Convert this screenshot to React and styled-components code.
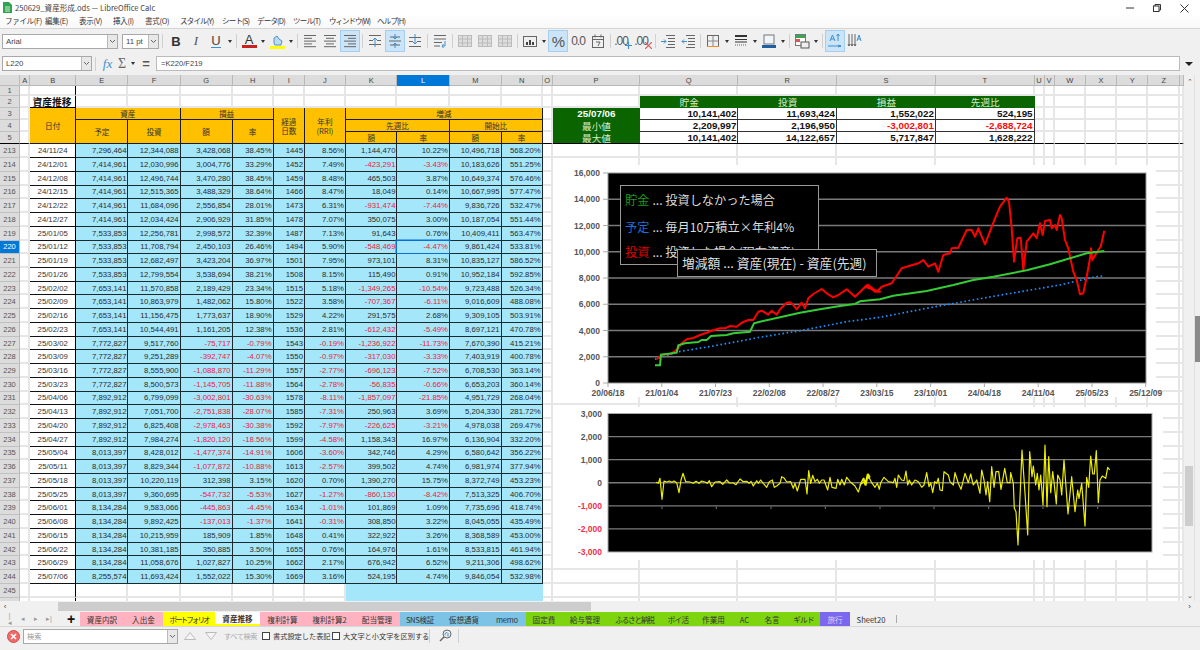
import React from "react";
import styled, { createGlobalStyle } from "styled-components";

const FONT = `"Liberation Sans","Noto Sans CJK JP",sans-serif`;
const CJK = `"Noto Sans CJK JP","Liberation Sans",sans-serif`;

const Global = createGlobalStyle`
  html, body { margin: 0; padding: 0; background: #f0f0f0; }
  * { box-sizing: border-box; }
`;

const Page = styled.div`
  width: 1200px; height: 650px; overflow: hidden; display: flex; flex-direction: column;
  background: #f0f0f0; font-family: ${FONT}; color: #333;
`;

/* ---------- title + menu ---------- */
const TitleBar = styled.div`
  height: 14px; flex: none; background: #fff; display: flex; align-items: center; padding-left: 3px;
  font: 7.600px ${CJK}; color: #444; gap: 3px; padding-top: 1px;
`;
const TitleText = styled.span`flex: 1; white-space: nowrap;`;
const WinControls = styled.div`display: flex; align-items: center; margin-right: 11px; gap: 19px; padding-top: 1px;`;
const MenuBar = styled.div`
  height: 15px; flex: none; background: linear-gradient(#fff, #f8f8f8); display: flex; align-items: center;
  padding: 0 0 2px 5px; gap: 10px; font: 7.500px ${CJK}; color: #333; border-bottom: 1px solid #d4d4d4;
`;
const MenuItem = styled.span`white-space: nowrap; width: ${p => p.$w}px; letter-spacing: ${p => p.$ls ?? -0.3}px;`;

/* ---------- toolbars ---------- */
const Toolbar = styled.div`
  height: 24px; flex: none; display: flex; align-items: center; padding-left: 2px; background: #f0f0f0;
`;
const FormulaBar = styled.div`
  height: 22px; flex: none; display: flex; align-items: center; padding: 0 0 1px 2px; background: #f0f0f0;
`;
const Combo = styled.div`
  width: ${p => p.$w}px; height: 15px; flex: none; border: 1px solid #a8a8a8; background: #fff; display: flex; align-items: center;
  margin-right: ${p => p.$mr || 0}px; font: 7.800px ${FONT}; color: #444; padding-left: 3px; justify-content: space-between;
`;
const ComboArrow = styled.span`
  width: 10px; height: 100%; background: #e8e8e8; border-left: 1px solid #bbb; display: flex; align-items: center; justify-content: center;
`;
const ToolBtn = styled.div`
  width: ${p => p.$w || 20}px; height: 22px; flex: none; display: flex; align-items: center; justify-content: center;
  background: ${p => p.$on ? "#cce4f7" : "transparent"}; border: 1px solid ${p => p.$on ? "#a3cff2" : "transparent"};
  color: #555; position: relative;
`;
const Caret = styled.span`
  width: 8px; flex: none; height: 8px; display: flex; align-items: center; justify-content: center;
  &::after { content: ""; border: 2.3px solid transparent; border-top: 3px solid #333; border-bottom: 0; }
`;
const Sep = styled.span`
  width: 1px; height: 14px; background: #d0d0d0; flex: none; margin: 0 ${p => p.$m ?? 2}px;
`;
const BoldGlyph = styled.span`font: 700 13px ${FONT}; color: #333;`;
const ItalicGlyph = styled.span`font: italic 13px "Liberation Serif", serif; color: #555;`;
const UnderGlyph = styled.span`font: 13px ${FONT}; color: #444; border-bottom: 1.5px solid #3d8fd1; line-height: 12px;`;
const ColorGlyph = styled.span`
  font: 13px ${FONT}; color: #333; line-height: 11px; width: 15px; text-align: center; border-bottom: 3px solid ${p => p.$c};
`;
const TextGlyph = styled.span`font: ${p => p.$s || 13}px ${FONT}; color: #555; letter-spacing: -1px;`;
const FxGlyph = styled.span`font: italic 13px "Liberation Serif", serif; color: #3d8fd1; width: 15px; text-align: center; margin-left: 1px;`;
const SumGlyph = styled.span`font: 14px "Liberation Serif", serif; color: #666; width: 14px; text-align: center;`;
const EqGlyph = styled.span`font: 700 13px ${FONT}; color: #555; width: 14px; text-align: center; margin: 0 3px 0 2px;`;
const FormulaInput = styled.div`
  width: 1024px; height: 15px; flex: none; background: #fff; border: 1px solid #bbb; font: 7.600px ${FONT}; color: #444;
  display: flex; align-items: center; padding-left: 4px;
`;
const FormulaArrow = styled.span`
  margin-left: 5px; border: 4px solid transparent; border-top: 4px solid #222; border-bottom: 0; width: 0; height: 0;
`;

const Svg16 = ({ children, w = 16, h = 16 }) => (
  <svg width={w} height={h} viewBox={`0 0 ${w} ${h}`} fill="none" stroke="#666" strokeWidth="1">{children}</svg>
);
const Lines = ({ rows }) => (
  <Svg16>{rows.map(([a, b], i) => <line key={i} x1={a} x2={b} y1={2.5 + i * 2.8} y2={2.5 + i * 2.8} />)}</Svg16>
);
const VAlign = ({ mode }) => (
  <Svg16>
    {mode === "top" && <><line x1="2" x2="14" y1="2.5" y2="2.5" /><line x1="2" x2="6" y1="7.5" y2="7.5" /><line x1="10" x2="14" y1="7.5" y2="7.5" /><line x1="2" x2="14" y1="11.5" y2="11.5" /><path d="M8 14V5M6 7l2-2 2 2" stroke="#3d8fd1" /></>}
    {mode === "mid" && <><line x1="2" x2="14" y1="8" y2="8" /><line x1="3" x2="13" y1="4" y2="4" /><line x1="3" x2="13" y1="12" y2="12" /><path d="M8 1v5M6 4l2 2 2-2M8 15v-5M6 12l2-2 2 2" stroke="#3d8fd1" /></>}
    {mode === "bot" && <><line x1="2" x2="14" y1="13.5" y2="13.5" /><line x1="2" x2="6" y1="8.5" y2="8.5" /><line x1="10" x2="14" y1="8.5" y2="8.5" /><line x1="2" x2="14" y1="4.5" y2="4.5" /><path d="M8 1v10M6 9l2 2 2-2" stroke="#3d8fd1" /></>}
  </Svg16>
);
const Merge = () => (
  <Svg16><rect x="1.5" y="2.5" width="13" height="11" fill="#ddd" stroke="#bbb" /><path d="M1.5 6h13M1.5 10h13M5.5 2.5v11M10.5 2.5v11" stroke="#bbb" /></Svg16>
);
const Indent = ({ dir }) => (
  <Svg16>
    <path d="M6 2.5h9M8 5.5h7M8 8.5h7M8 11.5h7M6 14.5h9" />
    {dir > 0 ? <path d="M1 8.5h5M4 6.5l2 2-2 2" stroke="#3d8fd1" /> : <path d="M7 8.5H2M4 6.5l-2 2 2 2" stroke="#3d8fd1" />}
  </Svg16>
);

const Spark = () => (
  <Svg16><rect x="1.5" y="3.5" width="13" height="10" stroke="#666" /><path d="M5 12V9M8 12V7M11 12V9" stroke="#444" strokeWidth="2" /></Svg16>
);

const Calendar = () => (
  <Svg16><rect x="2.5" y="3.5" width="11" height="11" /><path d="M2.5 6.5h11M5 1.5v3M11 1.5v3" /><path d="M6 9h4l-2 4" /></Svg16>
);

const DecSlot = styled.span`margin-left: -3px; margin-top: 8px; display: flex;`;
const DecMark = ({ add }) => (
  <>
    <TextGlyph $s={12}>.00</TextGlyph>
    <DecSlot>
      <svg width="7" height="7" viewBox="0 0 7 7">
        <path d={add ? "M3.5 0v7M0 3.5h7" : "M0 0l7 7M7 0L0 7"} stroke={add ? "#3d8fd1" : "#e05555"} strokeWidth="1.2" />
      </svg>
    </DecSlot>
  </>
);

const Chev = () => (
  <svg width="7" height="5" viewBox="0 0 7 5" fill="none" stroke="#666"><path d="M1 1l2.500 2.500L6 1" /></svg>
);

const Toolbar1 = () => (
  <Toolbar>
    <Combo $w={116} $mr={4}>Arial<ComboArrow><Chev /></ComboArrow></Combo>
    <Combo $w={37}>11 pt<ComboArrow><Chev /></ComboArrow></Combo>
    <Sep $m={3} />
    <ToolBtn><BoldGlyph>B</BoldGlyph></ToolBtn>
    <ToolBtn><ItalicGlyph>I</ItalicGlyph></ToolBtn>
    <ToolBtn><UnderGlyph>U</UnderGlyph></ToolBtn>
    <Caret /><Sep />
    <ToolBtn><ColorGlyph $c="#c9211e">A</ColorGlyph></ToolBtn>
    <Caret />
    <ToolBtn>
      <svg width="15" height="15" viewBox="0 0 15 15"><path d="M4 9V4l3-2 2 3 3 2-1 4H5z" fill="#bcdcf2" stroke="#4f94c8" /><rect y="12" width="15" height="3" fill="#ffff00" /></svg>
    </ToolBtn>
    <Caret /><Sep />
    <ToolBtn><Lines rows={[[2, 14], [2, 10], [2, 14], [2, 10], [2, 14]]} /></ToolBtn>
    <ToolBtn><Lines rows={[[2, 14], [4, 12], [2, 14], [4, 12], [2, 14]]} /></ToolBtn>
    <ToolBtn $on><Lines rows={[[2, 14], [6, 14], [2, 14], [6, 14], [2, 14]]} /></ToolBtn>
    <Sep />
    <ToolBtn><VAlign mode="top" /></ToolBtn>
    <ToolBtn $on><VAlign mode="mid" /></ToolBtn>
    <ToolBtn><VAlign mode="bot" /></ToolBtn>
    <Sep />
    <ToolBtn><Svg16><path d="M2 2.5h12M2 6h12M2 9.5h8M2 13h6" /><path d="M10 13h3V8M11.5 11l-1.5 2 1.5 2" stroke="#3d8fd1" /></Svg16></ToolBtn>
    <Sep />
    <ToolBtn><Merge /></ToolBtn>
    <ToolBtn><Merge /></ToolBtn>
    <ToolBtn><Merge /></ToolBtn>
    <Sep />
    <ToolBtn><Spark /></ToolBtn>
    <Caret />
    <ToolBtn $on><TextGlyph $s={15}>%</TextGlyph></ToolBtn>
    <ToolBtn><TextGlyph $s={12}>0.0</TextGlyph></ToolBtn>
    <ToolBtn><Calendar /></ToolBtn>
    <Sep />
    <ToolBtn><DecMark add /></ToolBtn>
    <ToolBtn><DecMark /></ToolBtn>
    <Sep />
    <ToolBtn><Indent dir={1} /></ToolBtn>
    <ToolBtn><Indent dir={-1} /></ToolBtn>
    <Sep />
    <ToolBtn><Svg16><rect x="2.5" y="2.5" width="11" height="11" stroke="#666" /><path d="M2.5 8h11M8 2.5v11" stroke="#888" /><path d="M2 13.5h12" stroke="#f08c28" /></Svg16></ToolBtn>
    <Caret />
    <ToolBtn><Svg16><path d="M2 3h12" strokeWidth="2" stroke="#333" /><path d="M2 6.5h12M2 9h12" stroke="#333" /><path d="M2 12h12" strokeDasharray="1 1" /></Svg16></ToolBtn>
    <Caret />
    <ToolBtn><Svg16><rect x="3" y="2" width="10" height="9" fill="#eef5fb" stroke="#777" /><rect x="1" y="12" width="14" height="3" fill="#1f5f9f" stroke="none" /></Svg16></ToolBtn>
    <Caret /><Sep />
    <ToolBtn><Svg16><rect x="1.5" y="1.5" width="10" height="11" fill="#fff" stroke="#777" /><rect x="2" y="2" width="9" height="3" fill="#3aa655" stroke="none" /><rect x="2" y="6" width="4" height="3" fill="#e05555" stroke="none" /><rect x="7" y="9" width="8" height="6" fill="#eee" stroke="#555" /></Svg16></ToolBtn>
    <Caret /><Sep />
    <ToolBtn $on><Svg16><path d="M3 8l2.5-6L8 8M4 6h3M1 13h13M11 14l3-1-3-1" stroke="#3d8fd1" /><path d="M11 1v7M9.500 3l1.500-2 1.500 2" stroke="#3d8fd1" /></Svg16></ToolBtn>
    <ToolBtn><Svg16><path d="M2 1v12M5 1v12M8 1v12M1 11l1 2 1-2M4 11l1 2 1-2M7 11l1 2 1-2" /><path d="M10 8l2-6 2 6M10.500 6h3" stroke="#3d8fd1" /></Svg16></ToolBtn>
  </Toolbar>
);

/* ---------- sheet ---------- */
const EDGES = [20, 30.4, 76, 128.5, 180.6, 232.7, 273.6, 305, 346, 397.5, 450, 501.6, 542.7, 553, 640, 738.5, 837, 936, 1034.6, 1044.6, 1054.6, 1086, 1117, 1148.5, 1180, 1184];
const LETTERS = ["A", "B", "E", "F", "G", "H", "I", "J", "K", "L", "M", "N", "O", "P", "Q", "R", "S", "T", "U", "V", "W", "X", "Y", "Z", ""];
const COL_TEMPLATE = EDGES.map((e, i) => `${(e - (i ? EDGES[i - 1] : 0)).toFixed(1)}px`).join(" ");

const Workspace = styled.div`height: 526px; flex: none; display: flex;`;
const Sheet = styled.div`
  width: 1184px; height: 526px; position: relative; overflow: hidden; background: #fff; display: grid;
  grid-template-columns: ${COL_TEMPLATE};
  grid-template-rows: 11px 10px 12px 12px 12px 12.400px repeat(33, 13.740px) 14px;
  font: 7.750px ${FONT}; color: #2c2c2c;
`;
const Corner = styled.div`background: #dcdcdc; border-right: 1px solid #bbb; border-bottom: 1px solid #bbb;`;
const ColHead = styled.div`
  background: ${p => p.$sel ? "#0078d7" : "#dcdcdc"}; color: ${p => p.$sel ? "#fff" : "#444"};
  border-right: 1px solid #b8b8b8; border-bottom: 1px solid ${p => p.$sel ? "#0078d7" : "#b8b8b8"};
  display: flex; align-items: center; justify-content: center; font-size: 7.500px;
`;
const RowHead = styled.div`
  background: ${p => p.$sel ? "#0078d7" : "#dcdcdc"}; color: ${p => p.$sel ? "#fff" : "#555"};
  border-right: 1px solid #b8b8b8; border-bottom: 1px solid ${p => p.$dark ? "#000" : "#c0c0c0"};
  display: flex; align-items: center; justify-content: center; font-size: 7.500px;
`;
const Blank = styled.div`
  border-right: ${p => p.$freeze ? "1px solid #000" : "2px solid #e6e6e6"};
  border-bottom: ${p => p.$dark ? "1px solid #000" : "2px solid #e6e6e6"};
  background: ${p => p.$fill ? "#a4e6fa" : "#fff"};
  ${p => p.$fill ? "border-color: #a4e6fa;" : ""}
`;
const SheetTitle = styled.div`
  border-right: 1px solid #000; border-bottom: 1px solid #000; font: 700 9.800px ${CJK}; color: #111;
  display: flex; align-items: center; padding-left: 2px; white-space: nowrap;
`;
const HeadCell = styled.div`
  grid-column: span ${p => p.$cs || 1}; grid-row: span ${p => p.$rs || 1};
  background: #ffc000; border-right: 1px solid #1a1a1a; border-bottom: 1px solid #1a1a1a;
  display: flex; align-items: center; justify-content: center; text-align: center; font: 7.600px/9px ${CJK}; color: #333;
`;
const DateCell = styled.div`
  border-right: 1px solid #000; border-bottom: 1px solid #111; background: #fff;
  display: flex; align-items: center; justify-content: center; color: #333;
`;
const Num = styled.div`
  background: #a4e6fa; border-right: 1px solid #1c2a30; border-bottom: 1px solid #1c2a30;
  display: flex; align-items: center; justify-content: flex-end; padding-right: 1px; white-space: nowrap;
  color: ${p => p.$neg ? "#f0203a" : "#2c2c2c"};
  position: relative;
`;
const Selection = styled.span`
  position: absolute; inset: -1px -1px -1px -1px; border: 1px solid #0a6fd0; box-shadow: 0 0 0 0.5px #0a6fd0; pointer-events: none;
`;
const GreenHead = styled.div`
  background: #0a6400; color: #d6ecd0; font: 9.600px ${CJK}; display: flex; align-items: center; justify-content: center; line-height: 10px;
`;
const GreenLabel = styled.div`
  background: #0a6400; color: ${p => p.$b ? "#fff" : "#d6ecd0"}; display: flex; align-items: center; justify-content: center;
  font: ${p => p.$b ? `700 9.800px ${FONT}` : `9.600px ${CJK}`}; line-height: 10px;
  border-bottom: ${p => p.$dark ? "1px solid #000" : "0"};
`;
const Val = styled.div`
  background: #fff; border-right: 1px solid #333; border-bottom: 1px solid #333;
  ${p => p.$dark ? "border-bottom-color:#000;" : ""}
  display: flex; align-items: center; justify-content: flex-end; padding-right: 1px;
  font: 700 9.800px ${FONT}; color: ${p => p.$neg ? "#ff0a0a" : "#111"};
`;

const RAW = `213 24/11/24 7,296,464 12,344,088 3,428,068 38.45% 1445 8.56% 1,144,470 10.22% 10,496,718 568.20%
214 24/12/01 7,414,961 12,030,996 3,004,776 33.29% 1452 7.49% -423,291 -3.43% 10,183,626 551.25%
215 24/12/08 7,414,961 12,496,744 3,470,280 38.45% 1459 8.48% 465,503 3.87% 10,649,374 576.46%
216 24/12/15 7,414,961 12,515,365 3,488,329 38.64% 1466 8.47% 18,049 0.14% 10,667,995 577.47%
217 24/12/22 7,414,961 11,684,096 2,556,854 28.01% 1473 6.31% -931,474 -7.44% 9,836,726 532.47%
218 24/12/27 7,414,961 12,034,424 2,906,929 31.85% 1478 7.07% 350,075 3.00% 10,187,054 551.44%
219 25/01/05 7,533,853 12,256,781 2,998,572 32.39% 1487 7.13% 91,643 0.76% 10,409,411 563.47%
220 25/01/12 7,533,853 11,708,794 2,450,103 26.46% 1494 5.90% -548,469 -4.47% 9,861,424 533.81%
221 25/01/19 7,533,853 12,682,497 3,423,204 36.97% 1501 7.95% 973,101 8.31% 10,835,127 586.52%
222 25/01/26 7,533,853 12,799,554 3,538,694 38.21% 1508 8.15% 115,490 0.91% 10,952,184 592.85%
223 25/02/02 7,653,141 11,570,858 2,189,429 23.34% 1515 5.18% -1,349,265 -10.54% 9,723,488 526.34%
224 25/02/09 7,653,141 10,863,979 1,482,062 15.80% 1522 3.58% -707,367 -6.11% 9,016,609 488.08%
225 25/02/16 7,653,141 11,156,475 1,773,637 18.90% 1529 4.22% 291,575 2.68% 9,309,105 503.91%
226 25/02/23 7,653,141 10,544,491 1,161,205 12.38% 1536 2.81% -612,432 -5.49% 8,697,121 470.78%
227 25/03/02 7,772,827 9,517,760 -75,717 -0.79% 1543 -0.19% -1,236,922 -11.73% 7,670,390 415.21%
228 25/03/09 7,772,827 9,251,289 -392,747 -4.07% 1550 -0.97% -317,030 -3.33% 7,403,919 400.78%
229 25/03/16 7,772,827 8,555,900 -1,088,870 -11.29% 1557 -2.77% -696,123 -7.52% 6,708,530 363.14%
230 25/03/23 7,772,827 8,500,573 -1,145,705 -11.88% 1564 -2.78% -56,835 -0.66% 6,653,203 360.14%
231 25/04/06 7,892,912 6,799,099 -3,002,801 -30.63% 1578 -8.11% -1,857,097 -21.85% 4,951,729 268.04%
232 25/04/13 7,892,912 7,051,700 -2,751,838 -28.07% 1585 -7.31% 250,963 3.69% 5,204,330 281.72%
233 25/04/20 7,892,912 6,825,408 -2,978,463 -30.38% 1592 -7.97% -226,625 -3.21% 4,978,038 269.47%
234 25/04/27 7,892,912 7,984,274 -1,820,120 -18.56% 1599 -4.58% 1,158,343 16.97% 6,136,904 332.20%
235 25/05/04 8,013,397 8,428,012 -1,477,374 -14.91% 1606 -3.60% 342,746 4.29% 6,580,642 356.22%
236 25/05/11 8,013,397 8,829,344 -1,077,872 -10.88% 1613 -2.57% 399,502 4.74% 6,981,974 377.94%
237 25/05/18 8,013,397 10,220,119 312,398 3.15% 1620 0.70% 1,390,270 15.75% 8,372,749 453.23%
238 25/05/25 8,013,397 9,360,695 -547,732 -5.53% 1627 -1.27% -860,130 -8.42% 7,513,325 406.70%
239 25/06/01 8,134,284 9,583,066 -445,863 -4.45% 1634 -1.01% 101,869 1.09% 7,735,696 418.74%
240 25/06/08 8,134,284 9,892,425 -137,013 -1.37% 1641 -0.31% 308,850 3.22% 8,045,055 435.49%
241 25/06/15 8,134,284 10,215,959 185,909 1.85% 1648 0.41% 322,922 3.26% 8,368,589 453.00%
242 25/06/22 8,134,284 10,381,185 350,885 3.50% 1655 0.76% 164,976 1.61% 8,533,815 461.94%
243 25/06/29 8,134,284 11,058,676 1,027,827 10.25% 1662 2.17% 676,942 6.52% 9,211,306 498.62%
244 25/07/06 8,255,574 11,693,424 1,552,022 15.30% 1669 3.16% 524,195 4.74% 9,846,054 532.98%`;
const ROWS = RAW.split("\n").map(l => l.trim().split(/\s+/));

const blanks = (from, to, key, opts = {}) => {
  const out = [];
  for (let c = from; c <= to; c++) out.push(<Blank key={`${key}-${c}`} {...opts} $freeze={c === 1} />);
  return out;
};

const SheetCells = () => {
  const cells = [];
  cells.push(<Corner key="corner" />);
  LETTERS.forEach((l, i) => cells.push(<ColHead key={`ch${i}`} $sel={l === "L"}>{l}</ColHead>));
  cells.push(<RowHead key="r1">1</RowHead>, ...blanks(0, 24, "r1"));
  cells.push(<RowHead key="r2">2</RowHead>, ...blanks(0, 0, "r2"), <SheetTitle key="t">資産推移</SheetTitle>, ...blanks(2, 13, "r2"));
  ["貯金", "投資", "損益", "先週比"].forEach(t => cells.push(<GreenHead key={t}>{t}</GreenHead>));
  cells.push(...blanks(18, 24, "r2b"));
  cells.push(
    <RowHead key="r3">3</RowHead>, ...blanks(0, 0, "r3"),
    <HeadCell key="d" $rs={3}>日付</HeadCell>,
    <HeadCell key="h1" $cs={2}>資産</HeadCell>,
    <HeadCell key="h2" $cs={2}>損益</HeadCell>,
    <HeadCell key="h3" $rs={3}>経過<br />日数</HeadCell>,
    <HeadCell key="h4" $rs={3}>年利<br />(RRI)</HeadCell>,
    <HeadCell key="h5" $cs={4}>増減</HeadCell>,
    ...blanks(12, 12, "r3"),
    <GreenLabel key="g1" $b>25/07/06</GreenLabel>,
    <Val key="v1">10,141,402</Val>, <Val key="v2">11,693,424</Val>, <Val key="v3">1,552,022</Val>, <Val key="v4">524,195</Val>,
    ...blanks(18, 24, "r3")
  );
  cells.push(
    <RowHead key="r4">4</RowHead>, ...blanks(0, 0, "r4"),
    <HeadCell key="h6" $rs={2}>予定</HeadCell>, <HeadCell key="h7" $rs={2}>投資</HeadCell>,
    <HeadCell key="h8" $rs={2}>額</HeadCell>, <HeadCell key="h9" $rs={2}>率</HeadCell>,
    <HeadCell key="h10" $cs={2}>先週比</HeadCell>, <HeadCell key="h11" $cs={2}>開始比</HeadCell>,
    ...blanks(12, 12, "r4"),
    <GreenLabel key="g2">最小値</GreenLabel>,
    <Val key="v5">2,209,997</Val>, <Val key="v6">2,196,950</Val>, <Val key="v7" $neg>-3,002,801</Val>, <Val key="v8" $neg>-2,688,724</Val>,
    ...blanks(18, 24, "r4")
  );
  cells.push(
    <RowHead key="r5" $dark>5</RowHead>, ...blanks(0, 0, "r5", { $dark: true }),
    <HeadCell key="h12">額</HeadCell>, <HeadCell key="h13">率</HeadCell>, <HeadCell key="h14">額</HeadCell>, <HeadCell key="h15">率</HeadCell>,
    ...blanks(12, 12, "r5", { $dark: true }),
    <GreenLabel key="g3" $dark>最大値</GreenLabel>,
    <Val key="v9" $dark>10,141,402</Val>, <Val key="v10" $dark>14,122,657</Val>, <Val key="v11" $dark>5,717,847</Val>, <Val key="v12" $dark>1,628,222</Val>,
    ...blanks(18, 24, "r5", { $dark: true })
  );
  ROWS.forEach(([n, d, ...vals]) => {
    const sel = n === "220";
    cells.push(<RowHead key={`r${n}`} $sel={sel}>{n}</RowHead>, ...blanks(0, 0, `r${n}`), <DateCell key={`d${n}`}>{d}</DateCell>);
    vals.forEach((v, i) => cells.push(
      <Num key={`c${n}-${i}`} $neg={v.startsWith("-")}>{v}{sel && i === 7 && <Selection />}</Num>
    ));
    cells.push(...blanks(12, 24, `r${n}`));
  });
  [245, 246].forEach(n => {
    cells.push(<RowHead key={`r${n}`}>{n === 245 ? n : ""}</RowHead>, ...blanks(0, 1, `r${n}`), ...blanks(2, 7, `r${n}x`));
    cells.push(...blanks(8, 11, `r${n}f`, { $fill: true }), ...blanks(12, 24, `r${n}y`));
  });
  return cells;
};

/* ---------- charts ---------- */
const ChartPanel = styled.div`
  position: absolute; left: ${p => p.$l}px; top: ${p => p.$t}px; width: ${p => p.$w}px; height: ${p => p.$h}px; background: #fff;
`;
const ChartSvg = styled.svg`display: block; overflow: visible;`;
const AxisLabel = styled.text`
  font: 700 8.500px ${FONT}; fill: ${p => p.$neg ? "#f0304a" : "#555"};
`;
const LegendBox = styled.div`
  position: absolute; left: ${p => p.$l}px; top: ${p => p.$t}px; width: ${p => p.$w}px; height: ${p => p.$h}px;
  background: #000; border: 1px solid #999; color: #ddd; font: ${p => p.$s}px/1 ${CJK}; padding: 0 0 0 4px; overflow: hidden; white-space: nowrap;
`;
const LegendLine = styled.div`height: ${p => p.$h || 26}px; display: flex; align-items: center;`;
const Key = styled.span`color: ${p => p.$c}; margin-right: 3px;`;

const tx = (pts, ox, oy) => pts.map(([x, y]) => `${(ox + x / 3).toFixed(1)},${(oy + y / 3).toFixed(1)}`).join(" ");
const RED = tx([[290,238],[305,224],[330,222],[345,213],[355,205],[365,190],[380,178],[400,174],[420,165],[440,158],[455,152],[480,145],[495,145],[510,138],[530,140],[545,128],[565,120],[580,120],[595,95],[605,92],[625,104],[635,92],[650,104],[660,88],[680,68],[690,67],[700,75],[710,88],[725,68],[735,85],[745,55],[760,42],[785,27],[800,40],[820,52],[835,45],[860,28],[885,50],[900,36],[920,16],[945,35],[960,35]], 560, 280)
  + " " + tx([[15,605],[25,600],[50,620],[65,605],[95,595],[125,550],[175,535],[190,525],[205,545],[225,535],[235,560],[250,510],[270,505],[275,490],[295,488],[320,435],[335,435],[345,455],[355,430],[375,478],[405,400],[420,365],[440,338],[447,350],[455,430],[462,530],[472,460],[482,458],[490,555],[500,470],[520,445],[530,460],[540,415],[548,450],[555,408],[570,405],[575,430],[585,420],[590,435],[600,390],[605,400],[615,465],[625,490],[640,560],[650,585],[660,628],[670,625],[680,575],[690,520],[693,490],[697,525],[715,495],[722,485],[733,437]], 860, 85);
const GREEN = tx([[285,256],[300,256],[303,224],[350,218],[355,196],[375,190],[415,186],[425,180],[440,180],[453,168],[500,165],[520,160],[570,155],[582,130],[600,125],[660,112],[720,98],[780,88],[840,78],[885,72],[900,64],[960,58]], 560, 280)
  + " " + tx([[100,632],[200,618],[280,600],[340,585],[400,575],[500,556],[570,538],[630,520],[680,505],[733,498]], 860, 85);
const BLUE = tx([[285,238],[355,215],[460,198],[600,172],[720,152],[860,125],[960,112]], 560, 280)
  + " " + tx([[200,670],[400,634],[600,600],[700,577],[733,572]], 860, 85);
const YELLOW = tx([[318,247],[325,250],[330,235],[336,298],[342,243],[350,246],[358,243],[365,247],[372,243],[380,248],[387,278],[393,240],[399,220],[407,245],[420,246],[430,250],[438,244],[447,250],[455,243],[465,246],[472,250],[478,242],[485,260],[495,246],[510,245],[518,253],[530,240],[538,249],[550,249],[558,254],[570,237],[580,245],[590,244],[597,250],[603,244],[610,258],[620,242],[625,250],[632,240],[640,250],[650,262],[658,245],[667,240],[673,262],[680,258],[690,250],[695,230],[703,235],[710,246],[722,245],[730,265],[735,250],[742,273],[752,238],[765,238],[771,282],[776,212],[782,250],[788,226],[795,245],[802,238],[808,250],[815,240],[822,240],[833,270],[840,232],[846,262],[858,265],[863,238],[870,255],[875,238],[883,255],[890,232],[900,245],[915,258],[925,276],[933,250],[942,235],[948,256],[955,222],[960,230]], 550, 400)
  + " " + tx([[0,255],[10,235],[15,255],[22,222],[35,248],[45,262],[52,250],[58,268],[62,248],[72,232],[85,245],[100,248],[105,235],[110,262],[115,225],[125,240],[132,242],[138,213],[143,255],[148,240],[155,255],[165,240],[175,245],[185,262],[192,255],[200,218],[207,260],[212,248],[218,278],[224,245],[230,250],[235,235],[240,270],[247,272],[252,215],[265,225],[270,245],[280,255],[285,218],[295,250],[303,268],[315,220],[325,248],[332,222],[340,255],[350,240],[360,280],[365,210],[372,240],[378,285],[383,245],[389,305],[395,200],[402,262],[408,215],[416,215],[423,268],[434,205],[442,248],[450,248],[452,218],[460,250],[463,325],[468,335],[474,435],[486,150],[495,280],[503,405],[509,155],[516,230],[520,198],[527,255],[532,220],[537,270],[542,225],[549,315],[555,135],[561,320],[566,170],[572,278],[578,215],[582,245],[589,312],[593,225],[600,240],[605,285],[612,180],[624,342],[635,230],[645,335],[653,270],[657,295],[665,250],[675,378],[680,232],[686,262],[692,168],[698,222],[703,222],[709,152],[715,308],[720,240],[727,228],[737,235],[743,202],[749,210]], 860, 400);

const XDATES = ["20/06/18", "21/01/04", "21/07/23", "22/02/08", "22/08/27", "23/03/15", "23/10/01", "24/04/18", "24/11/04", "25/05/23", "25/12/09"];

/* The sheet starts at y=75; both charts float over it, and their SVGs use page coordinates. */
const TOP = 75;

const MainChart = () => (
  <ChartPanel $l={553} $t={165 - TOP} $w={603} $h={232}>
    <ChartSvg width="603" height="232" viewBox="553 165 603 232">
      <rect x="608" y="173" width="538" height="210" fill="#000" stroke="#999" />
      {[0, 1, 2, 3, 4, 5, 6, 7, 8].map(i => {
        const y = 173 + i * 26.25;
        const v = (16000 - i * 2000).toLocaleString("en-US");
        return (
          <g key={v}>
            {i > 0 && i < 8 && <line x1="608" x2="1146" y1={y} y2={y} stroke="#7a7a7a" strokeWidth="1.300" />}
            <line x1="603" x2="608" y1={y} y2={y} stroke="#aaa" />
            <AxisLabel x="600" y={y + 3} textAnchor="end">{v}</AxisLabel>
          </g>
        );
      })}
      {XDATES.map((d, i) => {
        const x = 608 + i * 53.77;
        return (
          <g key={d}>
            <line x1={x} x2={x} y1="383" y2="387" stroke="#aaa" />
            <AxisLabel x={x} y="396" textAnchor="middle">{d}</AxisLabel>
          </g>
        );
      })}
      <polyline points={BLUE} fill="none" stroke="#1e90ff" strokeWidth="1.700" strokeDasharray="1.600 2.600" />
      <polyline points={RED} fill="none" stroke="#ff0000" strokeWidth="2" strokeLinejoin="round" />
      <polyline points={GREEN} fill="none" stroke="#35cc35" strokeWidth="2" />
    </ChartSvg>
    <LegendBox $l={67} $t={20} $w={199} $h={80} $s={12.2}>
      <LegendLine $h={28}><Key $c="#1b9a1b">貯金</Key>... 投資しなかった場合</LegendLine>
      <LegendLine $h={26}><Key $c="#1e6fd8">予定</Key>... 毎月10万積立×年利4%</LegendLine>
      <LegendLine $h={24}><Key $c="#e00000">投資</Key>... 投資した場合(現在資産)</LegendLine>
    </LegendBox>
    <LegendBox $l={124} $t={84} $w={200} $h={28} $s={12.8}>
      <LegendLine $h={26}>増減額 ... 資産(現在) - 資産(先週)</LegendLine>
    </LegendBox>
  </ChartPanel>
);

const SubChart = () => (
  <ChartPanel $l={553} $t={407 - TOP} $w={610} $h={153}>
    <ChartSvg width="610" height="153" viewBox="553 407 610 153">
      <rect x="608" y="413.500" width="544" height="138.500" fill="#000" stroke="#aaa" />
      {[0, 1, 2, 3, 4, 5, 6].map(i => {
        const y = 413.5 + i * 23.08;
        const n = 3000 - i * 1000;
        const v = n.toLocaleString("en-US");
        return (
          <g key={v}>
            {i > 0 && i < 6 && <line x1="608" x2="1152" y1={y} y2={y} stroke="#7a7a7a" strokeWidth="1.300" />}
            <AxisLabel x="602" y={y + 3} textAnchor="end" $neg={n < 0}>{v}</AxisLabel>
          </g>
        );
      })}
      {[662, 716.300, 771, 825.300, 880, 934, 988.700, 1043, 1097.700].map(x => (
        <line key={x} x1={x} x2={x} y1="506.500" y2="509" stroke="#777" />
      ))}
      <polyline points={YELLOW} fill="none" stroke="#eeee00" strokeWidth="1.200" strokeLinejoin="round" />
    </ChartSvg>
  </ChartPanel>
);

/* ---------- scrollbars, tabs, find bar ---------- */
const VScroll = styled.div`
  width: 11px; flex: none; background: #f0f0f0; position: relative; border-right: 1px solid #e0e0e0;
`;
const VThumb = styled.div`
  position: absolute; left: 1px; right: 1px; top: ${466 - TOP}px; height: 60px; background: #cdcdcd;
`;
const ScrollArrow = styled.span`
  position: absolute; left: 3px; ${p => p.$top ? "top: 4px;" : "bottom: 3px;"} font: 7px ${FONT}; color: #555; line-height: 5px;
`;
const Deck = styled.div`flex: 1; background: #f0f0f0; position: relative;`;
const DeckGrip = styled.div`
  position: absolute; left: 0; right: 0; top: ${316 - TOP}px; height: 46px; background: #8a8a8a;
`;
const HScroll = styled.div`
  height: 11px; flex: none; background: #f0f0f0; display: flex; align-items: center; font: 8px ${FONT}; color: #444;
`;
const HArrow = styled.span`width: ${p => p.$w}px; flex: none; text-align: center;`;
const HThumb = styled.div`width: 533px; height: 9px; background: #cdcdcd; flex: none;`;
const HSpacer = styled.div`flex: 1;`;

const TabBar = styled.div`
  height: 15px; flex: none; display: flex; background: #f0f0f0; align-items: stretch; border-bottom: 1px solid #d8d8d8;
`;
const TabNav = styled.div`width: 80px; flex: none; display: flex; align-items: center; padding-left: 7px; gap: 8px; color: #999; font: 7px ${FONT};`;
const NavGlyph = styled.span`width: 5px; text-align: center;`;
const Plus = styled.span`font: 700 14px ${FONT}; color: #111; margin-left: 8px; line-height: 12px;`;
const Tab = styled.div`
  width: ${p => p.$w}px; flex: none; background: ${p => p.$bg || "transparent"}; color: ${p => p.$fg || "#333"};
  font: 7.600px ${CJK}; display: flex; align-items: center; justify-content: center; white-space: nowrap;
  letter-spacing: ${p => p.$ls || 0}px;
  ${p => p.$active ? "border-bottom: 2px solid #ffff00; font-weight: 700;" : ""}
`;
const TabSep = styled.span`width: 1px; height: 8px; background: #aaa; align-self: center; margin-left: 4px;`;

const PINK = "#ffb3c1", BLU = "#7cc3e6", GRN = "#7dd40f";
const TABS = [
  ["資産内訳", 44, PINK], ["入出金", 39, PINK], ["ポートフォリオ", 52, "#ffff00", false, -2], ["資産推移", 45, "#fff", true],
  ["複利計算", 45, PINK], ["複利計算2", 49, PINK], ["配当管理", 46, PINK], ["SNS検証", 40, BLU, false, -0.3], ["仮想通貨", 48, BLU], ["memo", 38, BLU, false, -0.2],
  ["固定費", 36, GRN], ["給与管理", 46, GRN], ["ふるさと納税", 53, GRN, false, -1.2], ["ポイ活", 34, GRN, false, -0.8], ["作業用", 37, GRN], ["AC", 25, GRN], ["名言", 30, GRN], ["ギルド", 33, GRN, false, -0.8],
];

const FindBar = styled.div`
  flex: 1; display: flex; align-items: center; padding: 0 0 5px 7px; background: #f0f0f0; font: 7.200px ${CJK}; color: #333;
`;
const FindInput = styled.div`
  width: 155px; height: 15px; margin-left: 3px; background: #fff; border: 1px solid #a8a8a8; color: #999; display: flex; align-items: center;
  justify-content: space-between; padding-left: 3px; flex: none;
`;
const FindNav = styled.span`margin-left: ${p => p.$ml}px; display: flex;`;
const FindDim = styled.span`color: #aaa; margin-left: 7px; white-space: nowrap; width: 36px; letter-spacing: -0.4px;`;
const CheckBox = styled.span`
  width: 8px; height: 8px; background: #fff; border: 1px solid #444; flex: none; margin: 0 3px 0 2px;
`;
const CheckText = styled.span`white-space: nowrap; width: ${p => p.$w}px;`;

const App = () => (
  <Page>
    <Global />
    <TitleBar>
      <svg width="9" height="11" viewBox="0 0 9 11"><path d="M0 0h6l3 3v8H0z" fill="#2ea44f" /><path d="M2 5h5M2 7h5M2 9h5" stroke="#fff" strokeWidth=".8" /></svg>
      <TitleText>250629_資産形成.ods — LibreOffice Calc</TitleText>
      <WinControls>
        <svg width="8" height="8" viewBox="0 0 8 8"><path d="M0 4h8" stroke="#333" /></svg>
        <svg width="8" height="8" viewBox="0 0 8 8" fill="none" stroke="#333"><rect x=".5" y="2" width="5.500" height="5.500" /><path d="M2 2V.5h5.500V6H6" /></svg>
        <svg width="9" height="9" viewBox="0 0 9 9"><path d="M.5.5l8 8M8.500.5l-8 8" stroke="#333" /></svg>
      </WinControls>
    </TitleBar>
    <MenuBar>
      <MenuItem $w={30}>ファイル(F)</MenuItem><MenuItem $w={24}>編集(E)</MenuItem><MenuItem $w={24}>表示(V)</MenuItem>
      <MenuItem $w={22}>挿入(I)</MenuItem><MenuItem $w={25}>書式(O)</MenuItem><MenuItem $w={32} $ls={-0.8}>スタイル(Y)</MenuItem>
      <MenuItem $w={25} $ls={-0.8}>シート(S)</MenuItem><MenuItem $w={26} $ls={-0.8}>データ(D)</MenuItem><MenuItem $w={26} $ls={-0.8}>ツール(T)</MenuItem>
      <MenuItem $w={38} $ls={-1}>ウィンドウ(W)</MenuItem><MenuItem $w={29} $ls={-0.8}>ヘルプ(H)</MenuItem>
    </MenuBar>
    <Toolbar1 />
    <FormulaBar>
      <Combo $w={90}>L220<ComboArrow><Chev /></ComboArrow></Combo>
      <Sep $m={3} />
      <FxGlyph>fx</FxGlyph>
      <SumGlyph>Σ</SumGlyph>
      <Caret />
      <EqGlyph>=</EqGlyph>
      <FormulaInput>=K220/F219</FormulaInput>
      <FormulaArrow />
    </FormulaBar>
    <Workspace>
      <Sheet>
        <SheetCells />
        <MainChart />
        <SubChart />
      </Sheet>
      <VScroll>
        <ScrollArrow $top>⌃</ScrollArrow>
        <VThumb />
        <ScrollArrow>⌄</ScrollArrow>
      </VScroll>
      <Deck><DeckGrip /></Deck>
    </Workspace>
    <HScroll>
      <HArrow $w={10}>‹</HArrow>
      <HArrow $w={48} />
      <HThumb />
      <HSpacer />
      <HArrow $w={21}>›</HArrow>
    </HScroll>
    <TabBar>
      <TabNav>
        <NavGlyph>|◂</NavGlyph><NavGlyph>◂</NavGlyph><NavGlyph>▸</NavGlyph><NavGlyph>▸|</NavGlyph>
        <Plus>+</Plus>
      </TabNav>
      {TABS.map(([t, w, bg, act, ls]) => <Tab key={t} $w={w} $bg={bg} $active={act} $ls={ls}>{t}</Tab>)}
      <Tab $w={30} $bg="#7b68ee" $fg="#d8d4ff">旅行</Tab>
      <Tab $w={42}>Sheet20</Tab>
      <TabSep />
    </TabBar>
    <FindBar>
      <svg width="13" height="13" viewBox="0 0 13 13"><circle cx="6.500" cy="6.500" r="6" fill="#f06a6a" stroke="#d84a4a" /><path d="M4 4l5 5M9 4l-5 5" stroke="#fff" strokeWidth="1.500" /></svg>
      <FindInput>検索<ComboArrow><Chev /></ComboArrow></FindInput>
      <FindNav $ml={6}><svg width="12" height="8" viewBox="0 0 12 8" fill="#f4f4f4" stroke="#bbb"><path d="M6 .5L11.500 7.500H.5z" /></svg></FindNav>
      <FindNav $ml={9}><svg width="12" height="8" viewBox="0 0 12 8" fill="#f4f4f4" stroke="#bbb"><path d="M6 7.500L11.500 .5H.5z" /></svg></FindNav>
      <FindDim>すべて検索</FindDim>
      <CheckBox />
      <CheckText $w={57}>書式設定した表記</CheckText>
      <CheckBox />
      <CheckText $w={85}>大文字と小文字を区別する</CheckText>
      <Sep $m={1} />
      <FindNav $ml={8}>
        <svg width="14" height="14" viewBox="0 0 14 14" fill="none" stroke="#666"><circle cx="8" cy="5" r="4" /><path d="M5 8l-4 4" strokeWidth="1.500" /><path d="M7 6.500a1.500 1.500 0 1 1 2-2v3" stroke="#3d8fd1" /></svg>
      </FindNav>
      <Sep $m={5} />
    </FindBar>
  </Page>
);

export default App;
